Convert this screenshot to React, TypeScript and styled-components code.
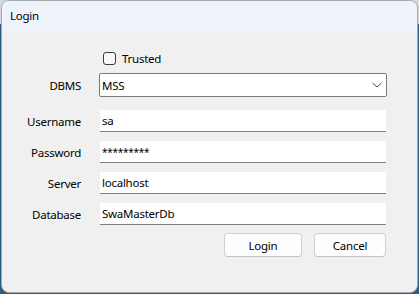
import * as React from 'react';
import styled, { createGlobalStyle } from 'styled-components';

const Global = createGlobalStyle`
  html, body {
    margin: 0;
    padding: 0;
  }
  body {
    width: 419px;
    height: 294px;
    overflow: hidden;
    background: linear-gradient(#d4d8dc 0 24px, #2a5d83 24px);
    font-family: "Segoe UI", "Noto Sans", sans-serif;
    font-size: 11.5px;
    letter-spacing: -0.25px;
    color: #000;
  }
`;

const Window = styled.div`
  margin-left: 1px;
  width: 417px;
  height: 293px;
  box-sizing: border-box;
  border: 1px solid #a3a9af;
  border-radius: 8px;
  overflow: hidden;
  background: #f0f0f0;
  display: flex;
  flex-direction: column;
`;

const TitleBar = styled.div`
  height: 30px;
  flex: 0 0 30px;
  background: #eef3f9;
  display: flex;
  align-items: center;
  padding-left: 8px;
  padding-bottom: 2px;
  box-sizing: border-box;
`;

const Body = styled.div`
  padding: 19px 30px 0 0;
  display: flex;
  flex-direction: column;
`;

const Row = styled.div<{ $top: number; $height: number }>`
  display: grid;
  grid-template-columns: 79px 1fr;
  column-gap: 18px;
  align-items: center;
  margin-top: ${p => p.$top}px;
  height: ${p => p.$height}px;
`;

const Label = styled.label`
  text-align: right;
  white-space: nowrap;
`;

const CheckWrap = styled.label`
  display: flex;
  align-items: center;
  gap: 6px;
  padding-left: 4px;
`;

const Box = styled.span`
  width: 13px;
  height: 13px;
  box-sizing: border-box;
  border: 1px solid #3a3a3a;
  border-radius: 3px;
  background: #f7f7f7;
`;

const Combo = styled.div`
  height: 24px;
  box-sizing: border-box;
  border: 1px solid #7a7a7a;
  border-radius: 2px;
  background: #fff;
  display: flex;
  align-items: center;
  justify-content: space-between;
  padding: 0 3px 0 2px;
`;

const Input = styled.div<{ $secret?: boolean }>`
  height: 22px;
  margin: 0 1px;
  box-sizing: border-box;
  background: #fff;
  border-bottom: 1px solid #7f7f7f;
  display: flex;
  align-items: center;
  padding-left: 2px;
  white-space: nowrap;
  font-size: ${p => (p.$secret ? '10px' : 'inherit')};
`;

const Buttons = styled.div`
  display: flex;
  justify-content: flex-end;
  gap: 12px;
  margin-top: 8px;
  padding-right: 1px;
`;

const Button = styled.button<{ $w: number }>`
  width: ${p => p.$w}px;
  height: 24px;
  box-sizing: border-box;
  border: 1px solid #d0d0d0;
  border-bottom-color: #c2c2c2;
  border-radius: 4px;
  background: #fdfdfd;
  font: inherit;
  letter-spacing: inherit;
  color: #000;
  padding: 0;
`;

const Chevron = () => (
  <svg width="12" height="8" viewBox="0 0 12 8">
    <polyline points="1.5,2 6,6 10.5,2" fill="none" stroke="#444" strokeWidth="1" />
  </svg>
);

const fields = [
  { label: 'Username', value: 'sa' },
  { label: 'Password', value: '*********', secret: true },
  { label: 'Server', value: 'localhost' },
  { label: 'Database', value: 'SwaMasterDb' },
];

export default function App() {
  return (
    <>
      <Global />
      <Window>
        <TitleBar>Login</TitleBar>
        <Body>
          <Row $top={0} $height={17}>
            <span />
            <CheckWrap>
              <Box />
              Trusted
            </CheckWrap>
          </Row>
          <Row $top={6} $height={24}>
            <Label>DBMS</Label>
            <Combo>
              <span>MSS</span>
              <Chevron />
            </Combo>
          </Row>
          {fields.map((f, i) => (
            <Row key={f.label} $top={i === 0 ? 13 : 9} $height={22}>
              <Label>{f.label}</Label>
              <Input $secret={f.secret}>{f.value}</Input>
            </Row>
          ))}
          <Buttons>
            <Button $w={78}>Login</Button>
            <Button $w={72}>Cancel</Button>
          </Buttons>
        </Body>
      </Window>
    </>
  );
}
